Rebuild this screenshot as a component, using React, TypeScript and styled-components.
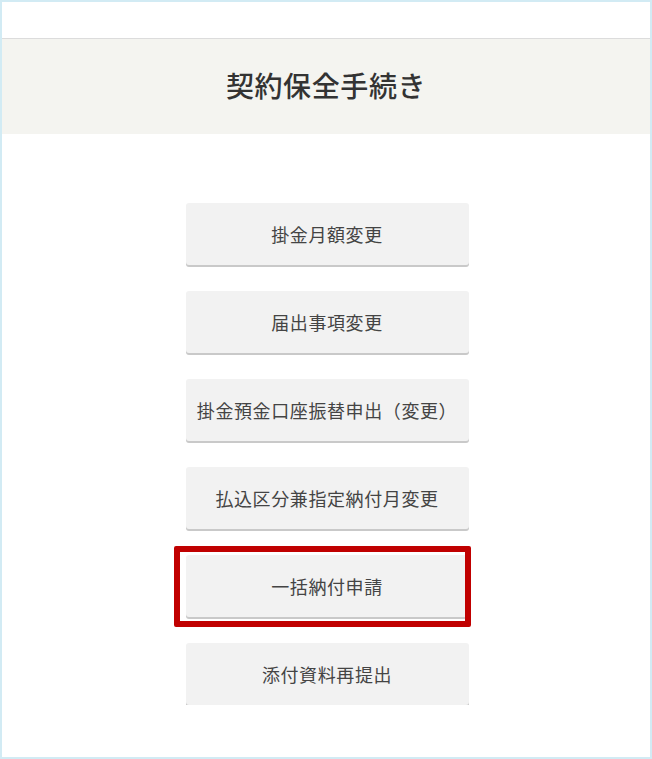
import React from "react";
import styled, { createGlobalStyle } from "styled-components";

const Global = createGlobalStyle`
  html, body { margin: 0; padding: 0; background: #fff; }
  body { font-family: "Noto Sans CJK JP", "Noto Sans", sans-serif; }
`;

const Frame = styled.div`
  box-sizing: border-box;
  width: 652px;
  height: 759px;
  border: 2px solid #d2ebf4;
  background: #fff;
  display: flex;
  flex-direction: column;
`;

const TopBar = styled.div`
  height: 36px;
  border-bottom: 1px solid #dcdcdc;
  background: #fff;
`;

const Header = styled.header`
  height: 95px;
  background: #f4f4f0;
  display: flex;
  align-items: center;
  justify-content: center;
`;

const Title = styled.h1`
  margin: 0;
  font-size: 28px;
  font-weight: 500;
  letter-spacing: 0.6px;
  color: #333;
  padding-bottom: 4px;
`;

const List = styled.div`
  height: 571px;
  overflow: hidden;
  padding-top: 69px;
  box-sizing: border-box;
  display: flex;
  flex-direction: column;
  align-items: center;
  gap: 24px;
`;

const Item = styled.div<{ $highlight?: boolean }>`
  position: relative;
  flex: none;
  margin-left: 2px;
  ${(p) =>
    p.$highlight
      ? `&::after {
    content: "";
    position: absolute;
    top: -9px;
    left: -12px;
    right: -2px;
    bottom: -8px;
    border: 6px solid #c00000;
    border-radius: 2px;
    pointer-events: none;
  }`
      : ""}
`;

const Button = styled.button`
  display: flex;
  align-items: center;
  justify-content: center;
  width: 283px;
  height: 62px;
  margin-bottom: 2px;
  padding: 0;
  border: none;
  border-radius: 3px;
  background: #f2f2f2;
  box-shadow: 0 2px 0 #c9c9c9;
  font-family: "Noto Sans CJK JP", "Noto Sans", sans-serif;
  font-size: 18px;
  letter-spacing: 0.6px;
  color: #444;
  white-space: nowrap;
  cursor: pointer;
`;

const items = [
  "掛金月額変更",
  "届出事項変更",
  "掛金預金口座振替申出（変更）",
  "払込区分兼指定納付月変更",
  "一括納付申請",
  "添付資料再提出",
];

export default function App() {
  return (
    <>
      <Global />
      <Frame>
        <TopBar />
        <Header>
          <Title>契約保全手続き</Title>
        </Header>
        <List>
          {items.map((t, i) => (
            <Item key={t} $highlight={i === 4}>
              <Button>{t}</Button>
            </Item>
          ))}
        </List>
      </Frame>
    </>
  );
}
